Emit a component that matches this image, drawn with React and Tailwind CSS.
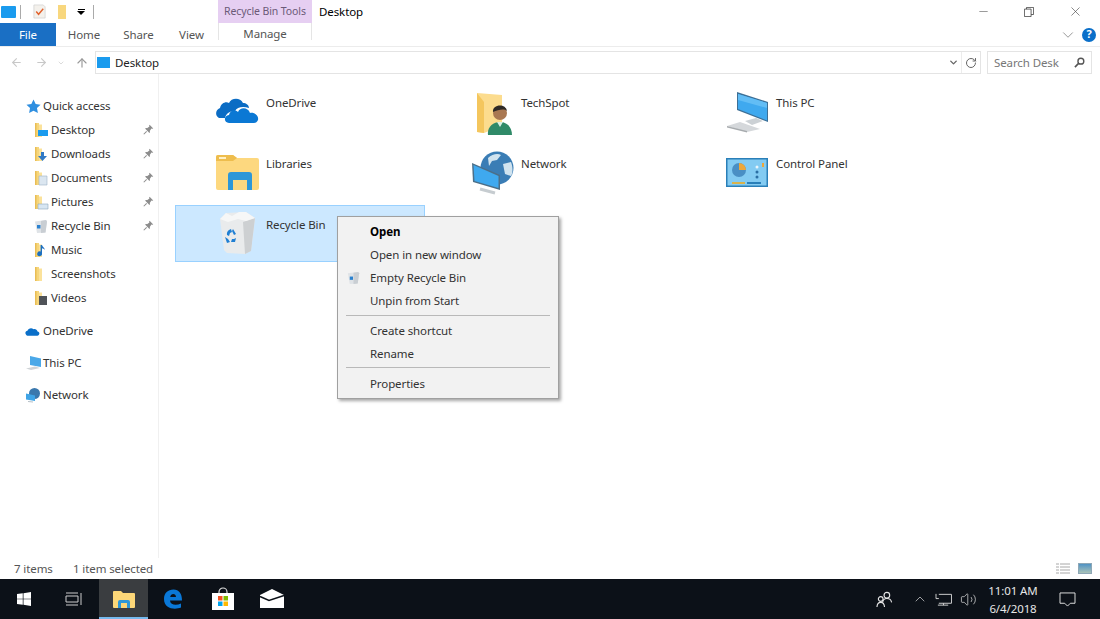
import React from "react";
import { ArrowLeft, ArrowRight, ArrowUp, ChevronDown, Minus, X, RotateCw, ChevronUp, Volume2 } from "lucide-react";

const font = "[font-family:'Noto_Sans','Open_Sans',sans-serif]";

function WinLogo({ className = "" }) {
  return (
    <svg viewBox="0 0 16 16" className={className}>
      <path d="M0 2.3 6.6 1.4V7.6H0ZM7.4 1.3 16 0V7.6H7.4ZM0 8.4H6.6V14.6L0 13.7ZM7.4 8.4H16V16L7.4 14.7Z" fill="#fff" />
    </svg>
  );
}

function SmallFolder({ overlay }) {
  return (
    <svg viewBox="0 0 16 16" className="w-4 h-4 shrink-0">
      <path d="M2 1h4v14H2z" fill="#f6d67c" />
      <path d="M2 1h1.5v14H2z" fill="#e9bd55" />
      <path d="M6 2.5h3V15H6z" fill="#fbe29b" />
      {overlay}
    </svg>
  );
}

const overlays = {
  Desktop: <path d="M5 8h10v6H5z" fill="#1a9bee" />,
  Downloads: <path d="M8 6h3v4h3l-4.5 5L5 10h3z" fill="#2f79c6" />,
  Documents: <path d="M6 6h8v9H6z" fill="#dbe6f0" stroke="#9db3c8" strokeWidth=".6" />,
  Pictures: <path d="M5 10h10v5H5z" fill="#d7e6f2" stroke="#8fa8bd" strokeWidth=".6" />,
  Music: <path d="M9 3v8.5a2.4 2.4 0 1 1-1.4-1.9V3h1.4c.4 2 2.6 2.4 3 5-1-1.200-2-1.500-3-1.700" fill="#1d70c0" />,
  Screenshots: null,
  Videos: <path d="M6 6h8v9H6z" fill="#4f5358" />,
};

function BinIcon({ className = "" }) {
  return (
    <svg viewBox="0 0 16 16" className={className}>
      <path d="M2 3.500 13 2l1 1.500-1.500 11L4 15 2 3.500z" fill="#dfe3e7" />
      <path d="M8 3 13 2l1 1.500-1.500 11L8 15z" fill="#c9ced3" />
      <path d="M4 7h3.500v3.500H4z" fill="#2c82cf" />
    </svg>
  );
}

function PinIcon() {
  return (
    <svg viewBox="0 0 12 12" className="w-[11px] h-[11px]">
      <path d="M7.200.8 11.200 4.800 10.300 5.300 9.200 5 7.400 7.600C7.800 8.600 7.500 9.300 7 9.800L2.200 5C2.700 4.500 3.400 4.200 4.400 4.600L7 2.800 6.700 1.700z" fill="#8c8c8c" />
      <path d="M4 8 .8 11.200" stroke="#8c8c8c" strokeWidth="1.100" />
    </svg>
  );
}

function SideRow({ name, pinned }) {
  return (
    <div className="h-6 flex items-center pl-[33px] relative">
      {name === "Recycle Bin" ? <BinIcon className="w-4 h-4 shrink-0" /> : <SmallFolder overlay={overlays[name]} />}
      <span className="ml-[2px]">{name}</span>
      {pinned && (
        <span className="absolute left-[143px] top-[6px]">
          <PinIcon />
        </span>
      )}
    </div>
  );
}

function OneDriveSmall() {
  return (
    <svg viewBox="0 0 16 12" className="w-[15px] h-[11px]">
      <path d="M1 9.500C-.5 8 .3 5.500 2.500 5.300 3.300 2.500 7 1.500 9 3.500 11.500 3 13 4.300 13.500 6 15.500 6.300 16 8 15 9.500 14.500 10.500 13.500 10.500 13 10.500H2.500C2 10.500 1.400 10 1 9.500z" fill="#0a6fc9" />
    </svg>
  );
}

function PcSmall() {
  return (
    <svg viewBox="0 0 18 16" className="w-[18px] h-4">
      <path d="M5 1 16 3.500V12L5 10z" fill="#4aa8e8" />
      <path d="M1 13.500 10 11.500 15 13 6 15z" fill="#cfd3d6" />
    </svg>
  );
}

function NetSmall() {
  return (
    <svg viewBox="0 0 16 16" className="w-4 h-4">
      <circle cx="9.500" cy="6.500" r="5.500" fill="#3a78ad" />
      <path d="M1 6.500 10 8.500V14L1 12.500z" fill="#3fa4e6" />
      <path d="M3 14.500 8 15" stroke="#b7c0c7" strokeWidth="1.200" />
    </svg>
  );
}

function OneDriveLarge() {
  return (
    <svg viewBox="0 0 44 48" className="w-11 h-12 shrink-0">
      <path d="M3 30C-1 28 -1 22 4 20 5 15 10 13 13 15 15 10 24 9 27 15 30 15 33 17 33 20 27 18 21 19 19 23 13 23 10 26 9 30z" fill="#0b6cc4" />
      <path d="M13 35C8 35 7 28 13 27 14 22 19 21 22 24 24 19 32 19 34 25 39 24 43 28 42 32 41 34 40 35 38 35z" fill="#0b78d4" />
    </svg>
  );
}

function TechSpotIcon() {
  return (
    <svg viewBox="0 0 44 48" className="w-11 h-12 shrink-0">
      <path d="M6 5 31 7V38L13 45 6 44z" fill="#fcdc8e" />
      <path d="M6 5 13 14V45L6 44z" fill="#f4c65d" />
      <path d="M17 47C16 39 22 34 29 34 36 34 41 39 41 47z" fill="#2f8a68" />
      <path d="M26 34 29 39 32 34z" fill="#d9efe3" />
      <circle cx="29" cy="25" r="7" fill="#a97852" />
      <path d="M22 24C21 16 35 15 36 23 33 20 27 22 22 24z" fill="#2f2a26" />
    </svg>
  );
}

function ThisPcIcon() {
  return (
    <svg viewBox="0 0 44 48" className="w-11 h-12 shrink-0">
      <path d="M11 4 42 14V34L11 22z" fill="#3d6f96" />
      <path d="M12 6 41 15V32.500L12 21z" fill="#3fa9ef" />
      <path d="M12 6 41 15V20L12 12z" fill="#62bdf5" />
      <path d="M19 33 30 30 37 33 26 37z" fill="#ccd1d5" />
      <path d="M1 38 14 34 34 41 21 44z" fill="#d5d8db" />
      <path d="M1 38 21 43V44.500L1 39.500z" fill="#a7abae" />
    </svg>
  );
}

function LibrariesIcon() {
  return (
    <svg viewBox="0 0 44 48" className="w-11 h-12 shrink-0">
      <path d="M0 8a2 2 0 0 1 2-2h15l4 3h20a2 2 0 0 1 2 2v28a2 2 0 0 1-2 2H2a2 2 0 0 1-2-2z" fill="#fdd87f" />
      <path d="M0 8a2 2 0 0 1 2-2h15l4 3-4 3H0z" fill="#eebd4d" />
      <path d="M3 8h7v2H3z" fill="#fff0c4" />
      <path d="M12 41V26a3 3 0 0 1 3-3h18a3 3 0 0 1 3 3v15h-5V31H17v10z" fill="#2d97d8" />
    </svg>
  );
}

function NetworkIcon() {
  return (
    <svg viewBox="0 0 44 48" className="w-11 h-12 shrink-0">
      <circle cx="26" cy="19" r="16.500" fill="#3a7db5" />
      <path d="M17 9C21 5 27 4 30 6L26 11 21 12 18 17zM32 15 40 13C42 18 42 24 40 27L34 25z" fill="#d0e3ef" />
      <path d="M1 14 29 26V41L2 33z" fill="#4c6f88" />
      <path d="M2.500 16 27.500 27V39L3.500 32z" fill="#3fa9ef" />
      <path d="M9 40 24 44" stroke="#c6ccd0" strokeWidth="3" />
    </svg>
  );
}

function ControlPanelIcon() {
  return (
    <svg viewBox="0 0 44 48" className="w-11 h-12 shrink-0">
      <rect x="0" y="9" width="42" height="29" fill="#2a7fb8" />
      <rect x="1.500" y="10.500" width="39" height="26" fill="#83cbf2" />
      <circle cx="13" cy="21" r="7" fill="#4a8fc4" />
      <path d="M13 14a7 7 0 0 1 7 7h-7z" fill="#eda73a" />
      <path d="M6 33h13v2H6z" fill="#d8b24c" />
      <path d="M21 33h14v2H21z" fill="#2a7fb8" />
      <circle cx="31" cy="18" r="1.500" fill="#e9f5fb" />
      <circle cx="31" cy="23" r="1.500" fill="#2a6ea3" />
      <circle cx="31" cy="28" r="1.500" fill="#2a6ea3" />
      <path d="M36 14h2v4h-2z" fill="#eda73a" />
    </svg>
  );
}

function RecycleLarge() {
  return (
    <svg viewBox="0 0 44 48" className="w-11 h-12 shrink-0">
      <path d="M4 9 10 3 30 2 39 8 35 41 29 44 11 43 8 40z" fill="#e9ebec" />
      <path d="M27 12 39 8 35 41 29 44z" fill="#cdd0d2" />
      <path d="M4 9 10 3 16 6 23 2 30 2 39 8 30 11 22 9 12 12z" fill="#f6f7f7" />
      <path d="M11 25a5 5 0 0 1 2-5l2-1 1 3-2 1-1 3zM17 19l3 5-2 1-2-4zM20 28l-1 4h-4l1-3h2z" fill="#1f7fd3" />
      <path d="M9 27l3 2 2 3-3 1z" fill="#1f7fd3" />
    </svg>
  );
}

function Tile({ icon, label, selected }) {
  return (
    <div className={`h-[57px] flex items-start pl-[41px] border ${selected ? "bg-[#cce8ff] border-[#99d1ff]" : "border-transparent"}`}>
      <div className="-ml-px -mt-px pt-[5px] flex">{icon}</div>
      <span className="ml-[6px] mt-[11px] leading-4 text-[#333]">{label}</span>
    </div>
  );
}

function MenuRow({ label, bold, icon }) {
  return (
    <div className={`flex items-center pl-[32px] relative ${bold ? "h-[22px] font-bold text-black" : "h-[23px]"}`}>
      {icon && <span className="absolute left-[8px] top-[4px]">{icon}</span>}
      {label}
    </div>
  );
}

function Sep({ className = "" }) {
  return <div className={`h-px mx-[8px] bg-[#b9b9b9] ${className}`} />;
}

function TaskButton({ children, active, className = "" }) {
  return (
    <div className={`h-full flex items-center justify-center relative ${active ? "bg-[#3a3d40]" : ""} ${className}`}>
      {children}
      {active && <div className="absolute left-0 right-0 bottom-0 h-[2px] bg-[#76b9ed]" />}
    </div>
  );
}

export default function App() {
  return (
    <div className={`w-[1100px] h-[619px] flex flex-col overflow-hidden bg-white text-[11.5px] tracking-[-0.1px] text-[#333] ${font}`}>
      {/* title bar */}
      <div className="h-[23px] flex shrink-0">
        <div className="flex items-center w-[218px] pl-[1px]">
          <div className="w-[15px] h-[12px] bg-[#1a9bee] rounded-[1px]" />
          <div className="w-px h-[14px] bg-[#aaa] ml-[4px]" />
          <svg viewBox="0 0 16 16" className="w-[15px] h-[15px] ml-[11px]">
            <path d="M2 1h10l2 2v12H2z" fill="#f4f1ec" stroke="#ccc" strokeWidth=".7" />
            <path d="M4.500 8 7 11l5-6" stroke="#e2622d" strokeWidth="1.500" fill="none" />
          </svg>
          <div className="w-[8px] h-[14px] ml-[11px] bg-[#f8d77e]" />
          <div className="ml-[11px] flex flex-col items-center gap-[1px]">
            <div className="w-[7px] h-px bg-black" />
            <div className="w-0 h-0 border-x-[4px] border-x-transparent border-t-[4px] border-t-black" />
          </div>
          <div className="w-px h-[14px] bg-[#aaa] ml-[8px]" />
        </div>
        <div className="w-[94px] bg-[#e6cff2] flex items-center justify-center text-[#6b5a78] text-[10.5px]">Recycle Bin Tools</div>
        <div className="ml-[7px] pt-[1px] flex items-center text-black">Desktop</div>
        <div className="ml-auto flex items-center text-[#444]">
          <Minus size={13} strokeWidth={1} className="mr-[34px]" />
          <svg viewBox="0 0 12 12" className="w-[10px] h-[10px] mr-[34px]">
            <path d="M.5 2.500h8v9h-8zM3 2.500V.5h8.500v8.500H8.500" fill="none" stroke="#444" strokeWidth="1" />
          </svg>
          <X size={15} strokeWidth={1} className="mr-[17px]" />
        </div>
      </div>

      {/* tabs */}
      <div className="h-[24px] flex shrink-0 border-b border-[#ececec]">
        <div className="w-[56px] h-[23px] bg-[#1a6fc4] text-white flex items-center justify-center">File</div>
        <div className="w-[56px] flex items-center justify-center text-[#555]">Home</div>
        <div className="w-[53px] flex items-center justify-center text-[#555]">Share</div>
        <div className="w-[53px] flex items-center justify-center text-[#555]">View</div>
        <div className="w-[94px] h-[17px] border-x border-[#e5e5e5] text-center text-[#555] leading-[22px]">Manage</div>
        <div className="ml-auto flex items-center">
          <ChevronDown size={18} strokeWidth={1} className="text-[#777] mr-[5px]" />
          <div className="w-[14px] h-[14px] rounded-full bg-[#0a6fc9] text-white text-[11px] font-bold flex items-center justify-center mr-[4px]">?</div>
        </div>
      </div>

      {/* address bar */}
      <div className="h-[27px] flex items-center shrink-0 pt-[4px]">
        <div className="w-[95px] flex items-center text-[#c8c8c8]">
          <ArrowLeft size={13} className="ml-[10px]" />
          <ArrowRight size={13} className="ml-[12px]" />
          <ChevronDown size={8} className="ml-[9px]" />
          <ArrowUp size={14} className="ml-[10px] text-[#999]" />
        </div>
        <div className="w-[886px] h-[23px] border border-[#e4e4e4] flex items-center text-[#222]">
          <div className="w-[13px] h-[11px] ml-[1px] bg-[#1a9bee]" />
          <span className="ml-[5px]">Desktop</span>
          <ChevronDown size={11} strokeWidth={3} className="ml-auto text-[#666] mr-[2px]" />
          <div className="w-px h-full bg-[#ececec]" />
          <RotateCw size={12} strokeWidth={2} className="text-[#666] mx-[3px]" />
        </div>
        <div className="w-[105px] h-[23px] ml-[6px] border border-[#e4e4e4] flex items-center pl-[6px] text-[#777]">
          Search Desk
          <svg viewBox="0 0 12 12" className="w-[11px] h-[11px] ml-auto mr-[6px]">
            <circle cx="7.500" cy="4.500" r="3.200" fill="none" stroke="#555" strokeWidth="1.500" />
            <path d="M5 7 1 11" stroke="#555" strokeWidth="1.800" />
          </svg>
        </div>
      </div>

      {/* body */}
      <div className="flex-1 min-h-0 flex relative">
        <nav className="w-[159px] shrink-0 border-r border-[#f0f0f0] pt-[20px]">
          <div className="h-6 flex items-center pl-[26px]">
            <svg viewBox="0 0 16 16" className="w-[15px] h-[15px]">
              <path d="M8 .5 10.300 5.400 15.500 6 11.700 9.700 12.700 15 8 12.400 3.300 15 4.300 9.700.5 6 5.700 5.400z" fill="#2f8fe0" />
            </svg>
            <span className="ml-[2px]">Quick access</span>
          </div>
          <SideRow name="Desktop" pinned />
          <SideRow name="Downloads" pinned />
          <SideRow name="Documents" pinned />
          <SideRow name="Pictures" pinned />
          <SideRow name="Recycle Bin" pinned />
          <SideRow name="Music" />
          <SideRow name="Screenshots" />
          <SideRow name="Videos" />
          <div className="h-6 mt-[9px] flex items-center pl-[25px]">
            <OneDriveSmall />
            <span className="ml-[3px]">OneDrive</span>
          </div>
          <div className="h-6 mt-[8px] flex items-center pl-[25px]">
            <PcSmall />
            <span>This PC</span>
          </div>
          <div className="h-6 mt-[8px] flex items-center pl-[25px]">
            <NetSmall />
            <span className="ml-[2px]">Network</span>
          </div>
        </nav>

        <main className="flex-1 pt-[9px] pl-[16px]">
          <div className="grid grid-cols-[250px_250px_250px] gap-x-[5px] gap-y-[4px]">
            <Tile icon={<OneDriveLarge />} label="OneDrive" />
            <Tile icon={<TechSpotIcon />} label="TechSpot" />
            <Tile icon={<ThisPcIcon />} label="This PC" />
            <Tile icon={<LibrariesIcon />} label="Libraries" />
            <Tile icon={<NetworkIcon />} label="Network" />
            <Tile icon={<ControlPanelIcon />} label="Control Panel" />
            <Tile icon={<RecycleLarge />} label="Recycle Bin" selected />
          </div>
        </main>

        {/* context menu */}
        <div className="absolute left-[337px] top-[142px] w-[222px] h-[183px] bg-[#f2f2f2] border border-[#a0a0a0] shadow-[2px_2px_3px_rgba(0,0,0,0.35)] pt-[4px] text-[#333]">
          <MenuRow label="Open" bold />
          <MenuRow label="Open in new window" />
          <MenuRow label="Empty Recycle Bin" icon={<BinIcon className="w-[15px] h-[15px]" />} />
          <MenuRow label="Unpin from Start" />
          <Sep className="mt-[3px] mb-[3px]" />
          <MenuRow label="Create shortcut" />
          <MenuRow label="Rename" />
          <Sep className="mt-[2px] mb-[4px]" />
          <MenuRow label="Properties" />
        </div>
      </div>

      {/* status bar */}
      <div className="h-[21px] shrink-0 flex items-center text-[#555] pl-[14px]">
        <span className="w-[59px]">7 items</span>
        <span>1 item selected</span>
        <div className="ml-auto mr-[8px] flex items-center gap-[8px]">
          <svg viewBox="0 0 14 12" className="w-[14px] h-[12px]">
            <path d="M0 1h3M4 1h10M0 4h3M4 4h10M0 7h3M4 7h10M0 10h3M4 10h10" stroke="#a8a8a8" />
          </svg>
          <div className="w-[14px] h-[11px] bg-gradient-to-b from-[#4f93c4] to-[#a9c2b7] border border-[#8ea7b6]" />
        </div>
      </div>

      {/* taskbar */}
      <div className="h-[40px] shrink-0 bg-[#0c1118] flex items-center text-[#e6e6e6]">
        <TaskButton className="w-[48px]">
          <WinLogo className="w-[14px] h-[14px]" />
        </TaskButton>
        <TaskButton className="w-[51px]">
          <svg viewBox="0 0 18 14" className="w-[18px] h-[14px]">
            <path d="M1 1h12M1 13h12M1 4h12v6H1zM16 1v12" stroke="#ccc" fill="none" strokeWidth="1" />
          </svg>
        </TaskButton>
        <TaskButton active className="w-[49px]">
          <svg viewBox="0 0 22 18" className="w-[22px] h-[18px]">
            <path d="M0 2a1 1 0 0 1 1-1h7l2 2h11a1 1 0 0 1 1 1v13a1 1 0 0 1-1 1H1a1 1 0 0 1-1-1z" fill="#fcd778" />
            <path d="M5 18v-6a2 2 0 0 1 2-2h8a2 2 0 0 1 2 2v6h-3v-5H8v5z" fill="#2d97d8" />
          </svg>
        </TaskButton>
        <TaskButton className="w-[50px]">
          <svg viewBox="0 0 20 20" className="w-5 h-5">
            <path d="M1 10C1 4 5 .5 10.500.5 16 .5 19 4.500 19 11.500H7C7.300 16 13 17 18 14.500V18.500C12 21 1 20 1 10ZM7.200 8H13C13 4 7.700 4 7.200 8Z" fill="#0a78d7" />
          </svg>
        </TaskButton>
        <TaskButton className="w-[49px]">
          <svg viewBox="0 0 24 24" className="w-6 h-6">
            <path d="M8 7V5a4 4 0 0 1 8 0v2" fill="none" stroke="#ddd" strokeWidth="1.200" />
            <path d="M1 6h22v17H1z" fill="#fff" />
            <path d="M7 9h4.500v4.500H7z" fill="#f25022" />
            <path d="M12.500 9H17v4.500h-4.500z" fill="#7fba00" />
            <path d="M7 14.500h4.500V19H7z" fill="#00a4ef" />
            <path d="M12.500 14.500H17V19h-4.500z" fill="#ffb900" />
          </svg>
        </TaskButton>
        <TaskButton className="w-[50px]">
          <svg viewBox="0 0 26 20" className="w-[26px] h-5">
            <path d="M1 6 13 0 25 6V19H1z" fill="#fff" />
            <path d="M1 7.500 10 11.500 25 6.500" fill="none" stroke="#0c1118" strokeWidth="1.500" />
          </svg>
        </TaskButton>

        <div className="ml-auto flex items-center h-full">
          <svg viewBox="0 0 18 18" className="w-[17px] h-[17px] mr-[19px]">
            <circle cx="11.500" cy="4.500" r="3" fill="none" stroke="#e6e6e6" strokeWidth="1.200" />
            <path d="M7 12c.5-3 2-4 4.500-4S16 9 16.500 12" fill="none" stroke="#e6e6e6" strokeWidth="1.200" />
            <circle cx="5" cy="8.500" r="2.500" fill="#0c1118" stroke="#e6e6e6" strokeWidth="1.200" />
            <path d="M1 17c.2-3 1.500-5 4-5s3.800 2 4 5" fill="none" stroke="#e6e6e6" strokeWidth="1.200" />
          </svg>
          <ChevronUp size={16} strokeWidth={1} className="mr-[7px]" />
          <svg viewBox="0 0 18 16" className="w-[17px] h-[15px] mr-[8px]">
            <path d="M4 2.500h13.500V12H4M1 2v3M1 7h3M1 7V5M3 14h11M9 12v2" fill="none" stroke="#d6d6d6" strokeWidth="1" />
          </svg>
          <Volume2 size={17} strokeWidth={1} className="mr-[5px]" />
          <div className="w-[62px] flex flex-col items-center leading-[18px] mr-[15px] pt-[1px]">
            <span>11:01 AM</span>
            <span>6/4/2018</span>
          </div>
          <svg viewBox="0 0 18 16" className="w-[17px] h-[15px] mr-[24px]">
            <path d="M1 1h16v11h-5l-3 3-3-3H1z" fill="none" stroke="#e6e6e6" strokeWidth="1" />
          </svg>
        </div>
      </div>
    </div>
  );
}
